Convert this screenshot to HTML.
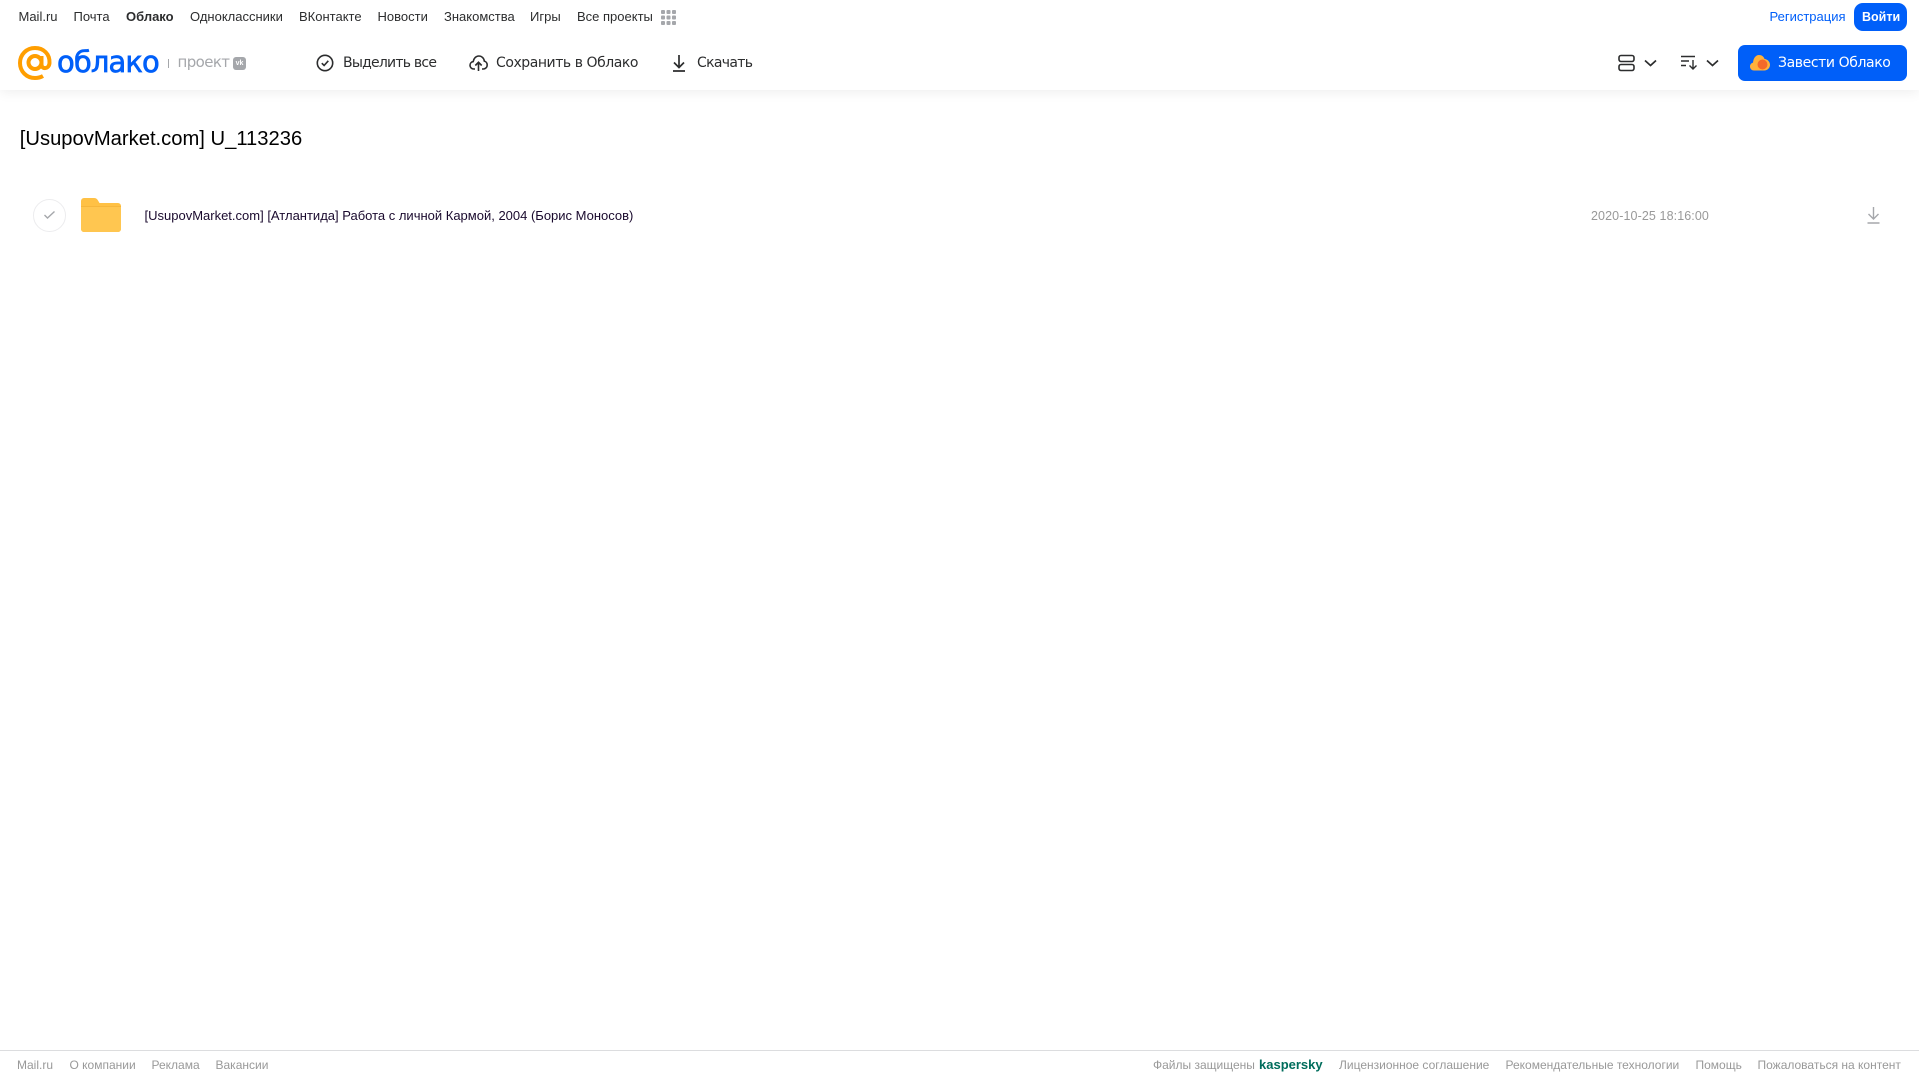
<!DOCTYPE html>
<html lang="ru"><head><meta charset="utf-8"><title>Облако</title>
<style>
html,body{margin:0;padding:0;width:1919px;height:1079px;overflow:hidden;background:#fff;font-family:"Liberation Sans",Arial,sans-serif}
.t{position:absolute;white-space:nowrap;line-height:20px;height:20px}
.n{top:7px;font-size:13px;color:#2c2d2e}
.a{top:53px;font-size:14px;color:#2c2d2e;font-family:"DejaVu Sans",sans-serif}
.f{top:1055px;font-size:12px;color:#999}
svg{position:absolute;display:block}
#hd{position:absolute;left:0;top:0;width:1919px;height:90px;background:#fff;box-shadow:0 2px 12px rgba(0,0,0,.07)}
</style></head><body>
<div id="hd"></div>
<span class="t n" style="left:18.5px">Mail.ru</span>
<span class="t n" style="left:73.5px">Почта</span>
<span class="t n" style="left:126px;font-weight:bold">Облако</span>
<span class="t n" style="left:190px">Одноклассники</span>
<span class="t n" style="left:299px">ВКонтакте</span>
<span class="t n" style="left:377.5px">Новости</span>
<span class="t n" style="left:444px">Знакомства</span>
<span class="t n" style="left:530px">Игры</span>
<span class="t n" style="left:577px">Все проекты</span>
<svg style="left:661px;top:10px" width="15" height="15" fill="#a5a7ab"><rect width="4" height="4" rx="1"/><rect x="5.5" width="4" height="4" rx="1"/><rect x="11" width="4" height="4" rx="1"/><rect y="5.5" width="4" height="4" rx="1"/><rect x="5.5" y="5.5" width="4" height="4" rx="1"/><rect x="11" y="5.5" width="4" height="4" rx="1"/><rect y="11" width="4" height="4" rx="1"/><rect x="5.5" y="11" width="4" height="4" rx="1"/><rect x="11" y="11" width="4" height="4" rx="1"/></svg>
<span class="t n" style="left:1769.5px;color:#005ff9">Регистрация</span>
<div style="position:absolute;left:1854px;top:3px;width:53px;height:28px;background:#005ff9;border-radius:9px"></div>
<span class="t n" style="left:1862px;color:#fff;font-weight:bold;font-size:12.5px">Войти</span>

<svg style="left:18px;top:46px" width="34" height="34" viewBox="0 0 34 34" fill="none" stroke="#ff9e00" stroke-width="4"><circle cx="17" cy="16.5" r="6.5"/><path d="M23.5 10v8.5c0 5 7.5 5 8-1.5C32 8 25.500 2 17 2 8.500 2 2 8.500 2 17s6.500 15 15 15c3 0 5.500-.6 8-2"/></svg>
<span class="t" style="left:57px;top:46px;height:32px;line-height:32px;font-size:29px;color:#005ff9;font-family:'DejaVu Sans',sans-serif;letter-spacing:-.9px;-webkit-text-stroke:.7px #005ff9">облако</span>
<div style="position:absolute;left:168px;top:59px;width:1px;height:9px;background:#a5a7ab"></div>
<span class="t" style="left:177.5px;top:52px;font-size:15px;color:#a5a7ab;font-family:'DejaVu Sans',sans-serif;letter-spacing:-.6px">проект</span>
<div style="position:absolute;left:233px;top:57px;width:13px;height:13px;border-radius:3px;background:#a5a7ab;color:#fff;font:bold 7px/13px 'Liberation Sans',sans-serif;text-align:center">vk</div>

<svg style="left:316px;top:54px" width="18" height="18" viewBox="0 0 18 18" fill="none" stroke="#2c2d2e" stroke-width="1.6"><circle cx="9" cy="9" r="7.7"/><path d="M5.800 9.200l2.300 2.300 4.200-4.700"/></svg>
<span class="t a" style="left:343px;letter-spacing:-.77px">Выделить все</span>
<svg style="left:469px;top:54px" width="19" height="18" viewBox="0 0 19 18" fill="none" stroke="#2c2d2e" stroke-width="1.6"><path d="M6 15H4.800C2.600 15 1 13.400 1 11.300c0-1.900 1.300-3.400 3.200-3.700C4.700 4.300 7 2 9.800 2c2.900 0 5.200 2.200 5.500 5.100 1.700.4 2.900 2 2.900 3.900 0 2.300-1.700 4-3.800 4H13"/><path d="M9.500 17V8.500M6.300 11.500l3.200-3.200 3.200 3.200"/></svg>
<span class="t a" style="left:496px;letter-spacing:-.45px">Сохранить в Облако</span>
<svg style="left:671px;top:54px" width="16" height="18" viewBox="0 0 16 18" fill="none" stroke="#2c2d2e" stroke-width="1.7"><path d="M8 1v12M3 8.500L8 13.500l5-5M2 17h12"/></svg>
<span class="t a" style="left:697px;letter-spacing:-.67px">Скачать</span>

<svg style="left:1618px;top:54px" width="17" height="18" viewBox="0 0 17 18" fill="none" stroke="#2c2d2e" stroke-width="1.6"><rect x="1" y="1.500" width="15" height="6" rx="2"/><rect x="1" y="10.500" width="15" height="6" rx="2"/></svg>
<svg style="left:1643.500px;top:59px" width="13" height="8" viewBox="0 0 13 8" fill="none" stroke="#2c2d2e" stroke-width="1.7"><path d="M1 1.500l5.500 5 5.500-5"/></svg>
<svg style="left:1681px;top:55px" width="17" height="15" viewBox="0 0 17 15" fill="none" stroke="#2c2d2e" stroke-width="1.4"><path d="M0 1.500h14M0 6h8M0 10.500h5M12 5v9M8.500 10.500l3.500 3.500 3.500-3.500"/></svg>
<svg style="left:1706px;top:59px" width="13" height="8" viewBox="0 0 13 8" fill="none" stroke="#2c2d2e" stroke-width="1.7"><path d="M1 1.500l5.500 5 5.500-5"/></svg>

<div style="position:absolute;left:1738px;top:45px;width:169px;height:36px;background:#005ff9;border-radius:7px"></div>
<svg style="left:1750px;top:54px" width="20" height="18" viewBox="0 0 20 18"><path d="M4 16.500C1.800 16.500 0 14.800 0 12.500c0-2 1.300-3.500 3-3.900C3.400 4.500 5.500 1 9 1c2.800 0 4.800 1.700 5.500 4 3 .2 5.500 2.800 5.500 5.800 0 3.200-2.500 5.700-5.700 5.700z" fill="#ffb13b"/><circle cx="12.500" cy="10.500" r="5" fill="#f4692a"/></svg>
<span class="t a" style="left:1778px;color:#fff;letter-spacing:-.4px">Завести Облако</span>

<span class="t" style="left:19.800px;top:127px;height:24px;line-height:24px;font-size:20.200px;color:#000">[UsupovMarket.com] U_113236</span>

<div style="position:absolute;left:33px;top:199px;width:31px;height:31px;border:1px solid #ececee;border-radius:50%"></div>
<svg style="left:42.500px;top:210px" width="13" height="10" viewBox="0 0 13 10" fill="none" stroke="#a5a7ab" stroke-width="1.4"><path d="M1.500 5l3 3 7-6.500"/></svg>
<svg style="left:81px;top:198px" width="40" height="34" viewBox="0 0 40 34"><path d="M0 3a3 3 0 013-3h10c2 0 3 .8 4 2.500L18.500 5H37a3 3 0 013 3v23a3 3 0 01-3 3H3a3 3 0 01-3-3z" fill="#ffc145"/><path d="M0 9h40v22a3 3 0 01-3 3H3a3 3 0 01-3-3z" fill="#ffc650"/><path d="M0 8h40v1H0z" fill="#f6b63c"/></svg>
<span class="t" style="left:144.500px;top:206px;font-size:13px;color:#1a0a2e">[UsupovMarket.com] [Атлантида] Работа с личной Кармой, 2004 (Борис Моносов)</span>
<span class="t" style="left:1591px;top:206px;font-size:12.500px;letter-spacing:.1px;color:#999">2020-10-25 18:16:00</span>
<svg style="left:1865.500px;top:206px" width="15" height="18" viewBox="0 0 15 18" fill="none" stroke="#a5a7ab" stroke-width="1.4"><path d="M7.500 1v11.500M2.500 8l5 5 5-5M1.500 17h12"/></svg>

<div style="position:absolute;left:0;top:1050px;width:1919px;height:1px;background:#dcdddf"></div>
<span class="t f" style="left:17px">Mail.ru</span>
<span class="t f" style="left:69.500px">О компании</span>
<span class="t f" style="left:151.500px">Реклама</span>
<span class="t f" style="left:215.500px">Вакансии</span>
<span class="t f" style="left:1153px">Файлы защищены</span>
<span class="t f" style="left:1259px;color:#006d5c;font-weight:bold;font-size:13px">kaspersky</span>
<span class="t f" style="left:1339px">Лицензионное соглашение</span>
<span class="t f" style="left:1505.500px">Рекомендательные технологии</span>
<span class="t f" style="left:1695.500px">Помощь</span>
<span class="t f" style="left:1757.500px">Пожаловаться на контент</span>
</body></html>
